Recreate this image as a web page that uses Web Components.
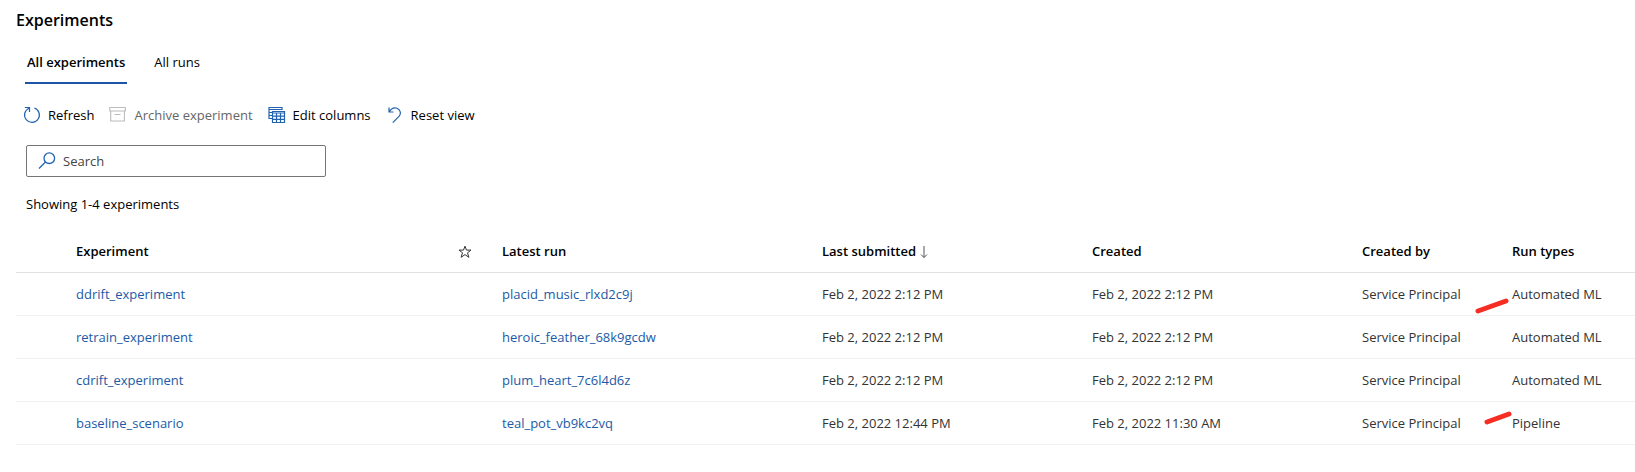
<!DOCTYPE html>
<html lang="en">
<head>
<meta charset="utf-8">
<title>Experiments</title>
<style>
  body { margin: 0; background: #fff; color: #000; font: 13px/20px "Open Sans", "Noto Sans", sans-serif; }
</style>
</head>
<body>
<experiments-page></experiments-page>
<script>
const ICONS = {
  refresh: '<svg width="18" height="18" viewBox="0 0 18 18" fill="none" stroke="#2263b0" stroke-width="1.2"><path d="M6 2.2A7.4 7.4 0 1 0 11.4 2M1.8 1.5H6.5V6"/></svg>',
  archive: '<svg width="18" height="18" viewBox="0 0 18 18" fill="none" stroke="#bcbcbc" stroke-width="1.1"><path d="M.8 1.500h15.500v3.500h-15.500zM1.700 5v10h13.700v-10M5.500 8.500h6"/></svg>',
  columns: '<svg width="18" height="18" viewBox="0 0 18 18" fill="none" stroke="#2263b0" stroke-width="1.2"><path d="M4 12.5H1V1.500H14V4M1 3.500H14M1 6.500H4M1 9.500H4"/><path d="M4.500 5.500h12v11h-12zM4.500 7h12M4.500 10.200h12M4.500 13.300h12M8.500 7v9.500M12.500 7v9.500"/></svg>',
  undo: '<svg width="18" height="18" viewBox="0 0 18 18" fill="none" stroke="#2263b0" stroke-width="1.2"><path d="M3 1.500V6H7.500M3 6C5 2.600 8.300 1.200 11 2.200C14.300 3.400 15.400 7.300 13.200 10.100L6.800 16.600"/></svg>',
  search: '<svg width="18" height="18" viewBox="0 0 18 18" fill="none" stroke="#2263b0" stroke-width="1.3"><circle cx="11.300" cy="6.200" r="5.300"/><path d="M7.500 10L1 16.500"/></svg>',
  star: '<svg width="14" height="16" viewBox="0 0 14 16" fill="none" stroke="#333"><path d="M7 1.200L8.500 5.100H13L9.500 7.800L10.900 12.300L7 9.600L3.100 12.300L4.500 7.800L1 5.100H5.500Z"/></svg>',
  down: '<svg width="8" height="16" viewBox="0 0 8 16" fill="none" stroke="#555"><path d="M4 1V12.500M1 9.500L4 12.500L7 9.500"/></svg>'
};

function define(name, render) {
  customElements.define(name, class extends HTMLElement {
    constructor() {
      super();
      this.attachShadow({ mode: 'open' });
    }
    connectedCallback() {
      this.shadowRoot.innerHTML = render(this);
    }
  });
}

define('ui-icon', el => `
  <style>:host { display: inline-flex; flex: none; } svg { display: block; }</style>
  ${ICONS[el.getAttribute('name')]}`);

define('ui-tab', el => `
  <style>
    :host { display: block; }
    button { font: inherit; color: inherit; background: none; border: 0; border-bottom: 2px solid transparent;
      padding: 0 2px 10px; line-height: 20px; cursor: pointer; }
    button[aria-selected="true"] { font-weight: 600; border-color: #1c55a5; }
  </style>
  <button role="tab" aria-selected="${el.hasAttribute('selected')}"><slot></slot></button>`);

define('command-button', el => `
  <style>
    :host { display: block; }
    button { display: flex; align-items: center; gap: 7px; font: inherit; color: inherit; background: none;
      border: 0; padding: 0; cursor: pointer; }
    button:disabled { color: #666; cursor: default; }
  </style>
  <button ${el.hasAttribute('disabled') ? 'disabled' : ''}><ui-icon name="${el.getAttribute('icon')}"></ui-icon><slot></slot></button>`);

define('search-box', () => `
  <style>
    :host { display: block; width: 300px; max-width: 100%; }
    label { display: flex; align-items: center; gap: 7px; box-sizing: border-box; height: 32px; padding: 0 11px;
      border: 1px solid #757575; border-radius: 2px; }
    input { flex: 1; min-width: 0; font: inherit; border: 0; outline: 0; padding: 0; background: none; color: inherit; }
    input::placeholder { color: #444; opacity: 1; }
  </style>
  <label><ui-icon name="search"></ui-icon><input type="search" placeholder="Search" aria-label="Search"></label>`);

// A hand-drawn red stroke that points at a run type.
define('red-mark', el => {
  const small = el.hasAttribute('small');
  return `
  <style>
    :host { position: absolute; right: 100%; ${small ? 'top: 8px' : 'top: 24px'}; pointer-events: none; }
    :host(:not([small])) { margin-right: 3px; }
    svg { display: block; }
  </style>
  ${small
    ? '<svg width="28" height="16"><path d="M3 12L25 4" stroke="#f62d22" stroke-width="5" stroke-linecap="round"/></svg>'
    : '<svg width="34" height="18"><path d="M3 14L31 4" stroke="#f62d22" stroke-width="5" stroke-linecap="round"/></svg>'}`;
});

const RUNS = [
  ['ddrift_experiment', 'placid_music_rlxd2c9j', 'Feb 2, 2022 2:12 PM', 'Feb 2, 2022 2:12 PM', 'Automated ML', '<red-mark></red-mark>'],
  ['retrain_experiment', 'heroic_feather_68k9gcdw', 'Feb 2, 2022 2:12 PM', 'Feb 2, 2022 2:12 PM', 'Automated ML', ''],
  ['cdrift_experiment', 'plum_heart_7c6l4d6z', 'Feb 2, 2022 2:12 PM', 'Feb 2, 2022 2:12 PM', 'Automated ML', ''],
  ['baseline_scenario', 'teal_pot_vb9kc2vq', 'Feb 2, 2022 12:44 PM', 'Feb 2, 2022 11:30 AM', 'Pipeline', '<red-mark small></red-mark>']
];

define('experiments-table', () => `
  <style>
    :host { display: block; }
    table { width: 100%; table-layout: fixed; border-collapse: separate; border-spacing: 0; }
    th, td { position: relative; height: 42px; padding: 0; text-align: left; white-space: nowrap;
      border-bottom: 1px solid #f0f0f0; }
    th { font-weight: 600; border-color: #e2e2e2; }
    td { color: #333; }
    a { color: #1c5aa6; text-decoration: none; }
    th ui-icon { vertical-align: middle; }
    th ui-icon[name="down"] { margin-left: 4px; }
    .pick { width: 60px; } .name { width: 382px; } .fav { width: 44px; } .run { width: 320px; }
    .date { width: 270px; } .by { width: 150px; }
  </style>
  <table>
    <colgroup><col class="pick"><col class="name"><col class="fav"><col class="run"><col class="date"><col class="date"><col class="by"><col></colgroup>
    <thead><tr><th></th><th>Experiment</th><th aria-label="Favorite"><ui-icon name="star"></ui-icon></th><th>Latest run</th>
      <th aria-sort="descending">Last submitted<ui-icon name="down"></ui-icon></th><th>Created</th><th>Created by</th><th>Run types</th></tr></thead>
    <tbody>${RUNS.map(([name, run, submitted, created, type, mark]) => `
      <tr><td></td><td><a href="#${name}">${name}</a></td><td></td><td><a href="#${run}">${run}</a></td>
      <td>${submitted}</td><td>${created}</td><td>Service Principal</td><td>${type}${mark}</td></tr>`).join('')}
    </tbody>
  </table>`);

define('experiments-page', () => `
  <style>
    :host { display: block; padding: 8px 0 24px 16px; }
    h1 { margin: 0; font-size: 16px; line-height: 24px; font-weight: 600; }
    .tabs { display: flex; gap: 25px; margin: 20px 0 0 9px; }
    .commands { display: flex; align-items: center; gap: 15px; margin: 21px 0 0 7px; }
    search-box { margin: 20px 0 0 10px; }
    p { margin: 17px 0 0 10px; }
    experiments-table { margin-top: 16px; }
  </style>
  <h1>Experiments</h1>
  <div class="tabs" role="tablist"><ui-tab selected>All experiments</ui-tab><ui-tab>All runs</ui-tab></div>
  <div class="commands">
    <command-button icon="refresh">Refresh</command-button>
    <command-button icon="archive" disabled>Archive experiment</command-button>
    <command-button icon="columns">Edit columns</command-button>
    <command-button icon="undo">Reset view</command-button>
  </div>
  <search-box></search-box>
  <p>Showing 1-4 experiments</p>
  <experiments-table></experiments-table>`);
</script>
</body>
</html>
